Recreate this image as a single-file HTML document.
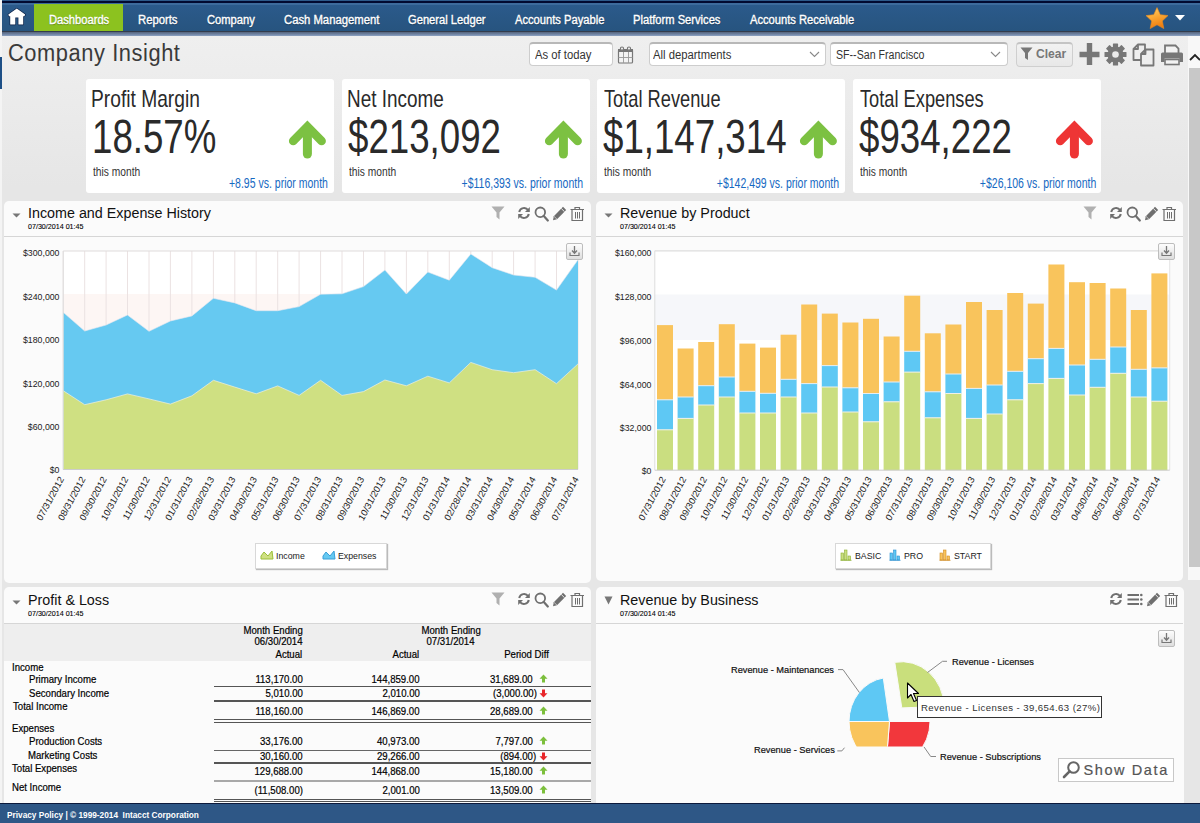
<!DOCTYPE html>
<html><head><meta charset="utf-8">
<style>
*{margin:0;padding:0;box-sizing:border-box}
html,body{width:1200px;height:823px;overflow:hidden}
body{font-family:"Liberation Sans",sans-serif;background:#f4f4f4;position:relative;color:#222}
.abs{position:absolute}
.t{position:absolute;white-space:nowrap;line-height:1;transform-origin:0 0}
#topline{left:2px;top:0;width:1198px;height:4.5px;background:linear-gradient(#2d5a8a 0,#2d5a8a 1px,#020a30 1px,#020a30 3.5px,#3d6b9c 3.5px)}
#nav{left:2px;top:4.5px;width:1198px;height:26.5px;background:linear-gradient(#2b5a8b,#27547f)}
#navsh{left:2px;top:31px;width:1198px;height:5px;background:linear-gradient(#333c4c 0,#333c4c 1px,#56657c 1px,#6c80a0 3px,#8ea3c2 5px)}
.nv{color:#fff;font-size:12px;top:14px;-webkit-text-stroke:0.35px #fff;text-shadow:0 1px 1px rgba(0,0,0,.35)}
#page{left:2px;top:36px;width:1198px;height:767px;background:linear-gradient(#efefef,#e6e6e6 150px,#e6e6e6)}
#footer{left:0;top:803px;width:1200px;height:20px;background:#2e5786;border-top:2px solid #0c1a3c}
.card{position:absolute;top:79px;height:114px;width:248px;background:#fff;border-radius:3px}
.ct{font-size:24px;color:#2a2a2a;top:8.4px;left:6.6px;transform:scaleX(.78)}
.cn{font-size:47.5px;color:#2a2a2a;top:34px;left:5.5px;transform:scaleX(.772)}
.cm{font-size:13.2px;color:#333;top:86.1px;left:7px;transform:scaleX(.775)}
.cp{font-size:14px;color:#1669c2;top:97.3px;transform:scaleX(.75);transform-origin:100% 0}
.panel{position:absolute;background:#fbfbfb;border-radius:5px}
.inp{position:absolute;top:42.3px;height:24px;background:#fff;border:1px solid #cdcdcd;border-top:2px solid #b8b8b8;border-radius:4px}
.it{font-size:12px;color:#333;top:48.5px;transform:scaleX(.94)}
</style></head><body>
<div id="topline" class="abs"></div>
<div id="nav" class="abs"></div>
<div id="navsh" class="abs"></div>
<div class="abs" style="left:34px;top:4px;width:89px;height:27px;background:#8cc21f"></div>
<!-- home icon -->
<svg class="abs" style="left:7px;top:8px" width="20" height="19" viewBox="0 0 20 19">
<path d="M9.8 0.6 L18.2 6.6 L17.4 8.2 L16.2 8.2 L16.2 16.6 L11.4 16.6 L11.4 9.6 L8.3 9.6 L8.3 16.6 L3.2 16.6 L3.2 8.2 L2 8.2 L1.3 6.6 Z" fill="#fff" stroke="#0b1f46" stroke-width="1.3" stroke-linejoin="round" paint-order="stroke"/>
</svg>
<span class="t nv" style="left:48.5px;transform:scaleX(.93)">Dashboards</span>
<span class="t nv" style="left:137.5px;transform:scaleX(.94)">Reports</span>
<span class="t nv" style="left:206.5px;transform:scaleX(.93)">Company</span>
<span class="t nv" style="left:284px;transform:scaleX(.94)">Cash Management</span>
<span class="t nv" style="left:408px;transform:scaleX(.93)">General Ledger</span>
<span class="t nv" style="left:514.5px;transform:scaleX(.93)">Accounts Payable</span>
<span class="t nv" style="left:633px;transform:scaleX(.93)">Platform Services</span>
<span class="t nv" style="left:750px;transform:scaleX(.93)">Accounts Receivable</span>
<!-- star -->
<svg class="abs" style="left:1143.5px;top:5.5px" width="26" height="24" viewBox="0 0 26 24">
<defs><linearGradient id="sg" x1="0" y1="0" x2="0.3" y2="1"><stop offset="0" stop-color="#ffd36a"/><stop offset="0.55" stop-color="#f9a531"/><stop offset="1" stop-color="#ef7d10"/></linearGradient></defs>
<path d="M13.00,1.60 L16.29,8.67 L24.03,9.62 L18.33,14.93 L19.82,22.58 L13.00,18.80 L6.18,22.58 L7.67,14.93 L1.97,9.62 L9.71,8.67 Z" fill="url(#sg)" stroke="#e98a1c" stroke-width="0.6" stroke-linejoin="round"/>
</svg>
<svg class="abs" style="left:1175px;top:15px" width="10" height="6" viewBox="0 0 10 6"><path d="M0 0 L10 0 L5 5.5 Z" fill="#fff"/></svg>

<div id="page" class="abs"></div><div class="abs" style="left:0;top:57px;width:1.5px;height:32px;background:#1d4f86"></div>
<div id="footer" class="abs"></div>

<!-- title -->
<span class="t" style="left:8.3px;top:42.3px;font-size:23px;letter-spacing:0.6px;color:#3a3a3a;transform:scaleX(.95)">Company Insight</span>

<!-- toolbar -->
<div class="inp" style="left:529px;width:84px"></div>
<span class="t it" style="left:534.5px">As of today</span>
<svg class="abs" style="left:617px;top:46px" width="17" height="18" viewBox="0 0 17 18">
<rect x="1.5" y="3.5" width="14" height="13.5" rx="1" fill="#f4f4f4" stroke="#777" stroke-width="1.2"/>
<rect x="1" y="3" width="15" height="3" fill="#777"/>
<circle cx="5" cy="2.6" r="1.6" fill="#eee" stroke="#777" stroke-width="1.1"/><circle cx="12" cy="2.6" r="1.6" fill="#eee" stroke="#777" stroke-width="1.1"/>
<path d="M1.5 11.5H15.5M6.5 6V17M11.5 6V17" stroke="#999" stroke-width="0.9"/>
</svg>
<div class="inp" style="left:648.5px;width:177.5px"></div>
<span class="t it" style="left:653px">All departments</span>
<svg class="abs" style="left:809px;top:51px" width="11" height="7" viewBox="0 0 11 7"><path d="M1 1 L5.5 5.5 L10 1" fill="none" stroke="#888" stroke-width="1.1"/></svg>
<div class="inp" style="left:830px;width:177.5px"></div>
<span class="t it" style="left:835.5px;transform:scaleX(.885)">SF--San Francisco</span>
<svg class="abs" style="left:990px;top:51px" width="11" height="7" viewBox="0 0 11 7"><path d="M1 1 L5.5 5.5 L10 1" fill="none" stroke="#888" stroke-width="1.1"/></svg>
<div class="abs" style="left:1015.5px;top:41.5px;width:57.5px;height:25px;border:1px solid #cfcfcf;border-top:2px solid #c4c4c4;border-radius:4px;background:linear-gradient(#f2f2f2,#e8e8e8)"></div>
<svg class="abs" style="left:1020px;top:47px" width="13" height="14" viewBox="0 0 13 14"><path d="M0.5 0.5 H12.5 L8 6 V13 L5 11 V6 Z" fill="#777"/></svg>
<span class="t" style="left:1035.5px;top:47px;font-size:13px;font-weight:bold;color:#777;transform:scaleX(.93)">Clear</span>
<!-- plus -->
<svg class="abs" style="left:1078.5px;top:42.5px" width="22" height="23" viewBox="0 0 22 23"><path d="M7.8 0H13.2V8.8H20.5V14.2H13.2V22H7.8V14.2H0.5V8.8H7.8Z" fill="#777"/></svg>
<!-- gear -->
<svg class="abs" style="left:1104px;top:43px" width="23" height="23" viewBox="-11.5 -11.5 23 23">
<g fill="#777">
<circle r="8"/>
<g id="tooth"><rect x="-2.6" y="-11" width="5.2" height="5" rx="0.6"/></g>
<use href="#tooth" transform="rotate(45)"/><use href="#tooth" transform="rotate(90)"/><use href="#tooth" transform="rotate(135)"/>
<use href="#tooth" transform="rotate(180)"/><use href="#tooth" transform="rotate(225)"/><use href="#tooth" transform="rotate(270)"/><use href="#tooth" transform="rotate(315)"/>
</g>
<circle r="3.3" fill="#eaeaea"/>
</svg>
<!-- copy -->
<svg class="abs" style="left:1132px;top:43px" width="24" height="24" viewBox="0 0 24 24">
<path d="M1.5 6 L6 1.5 H13 V17 H1.5 Z M1.5 6 H6 V1.5" fill="#eee" stroke="#777" stroke-width="1.8" stroke-linejoin="round"/>
<path d="M9 11 L13.5 6.5 H21.5 V22.5 H9 Z M9 11 H13.5 V6.5" fill="#eee" stroke="#777" stroke-width="1.8" stroke-linejoin="round"/>
</svg>
<!-- printer -->
<svg class="abs" style="left:1160px;top:44px" width="24" height="22" viewBox="0 0 24 22">
<path d="M5 9 V1.5 H15.5 L18.5 4.5 V9" fill="#f3f3f3" stroke="#777" stroke-width="1.8"/>
<path d="M2.5 8.5 H21.5 Q23 8.5 23 10 V18 H19.5 V14.5 H4.5 V18 H1 V10 Q1 8.5 2.5 8.5Z" fill="#777"/>
<rect x="5" y="15.5" width="14" height="5" fill="#f3f3f3" stroke="#777" stroke-width="1.6"/>
</svg>
<!-- scrollbar -->
<div class="abs" style="left:1188px;top:36px;width:12px;height:544px;background:#f8f8f8"></div>
<div class="abs" style="left:1189px;top:68px;width:11px;height:499px;background:#c8c8c8"></div>
<svg class="abs" style="left:1189px;top:52px" width="11" height="11" viewBox="0 0 11 11"><path d="M1 8 L6 3 L11 8" fill="none" stroke="#222" stroke-width="1.8"/></svg>

<!-- KPI cards -->
<div class="card" style="left:86px">
<span class="t ct" style="left:5.3px;transform:scaleX(.80)">Profit Margin</span><span class="t cn">18.57%</span><span class="t cm">this month</span><span class="t cp" style="right:6.5px">+8.95 vs. prior month</span>
</div>
<div class="card" style="left:342px">
<span class="t ct" style="left:4.6px;transform:scaleX(.788)">Net Income</span><span class="t cn">$213,092</span><span class="t cm">this month</span><span class="t cp" style="right:7px">+$116,393 vs. prior month</span>
</div>
<div class="card" style="left:597px">
<span class="t ct" style="left:6.6px;transform:scaleX(.76)">Total Revenue</span><span class="t cn">$1,147,314</span><span class="t cm">this month</span><span class="t cp" style="right:5.5px">+$142,499 vs. prior month</span>
</div>
<div class="card" style="left:853px">
<span class="t ct" style="left:6.6px;transform:scaleX(.76)">Total Expenses</span><span class="t cn">$934,222</span><span class="t cm">this month</span><span class="t cp" style="right:5px">+$26,106 vs. prior month</span>
</div>
<svg class="abs" style="left:287.3px;top:118px" width="41" height="42" viewBox="0 0 41 42"><path d="M6.2 23 L20.4 8.6 L34.6 23" fill="none" stroke="#7cc142" stroke-width="8.6" stroke-linecap="round" stroke-linejoin="miter"/><path d="M20.4 12 V36" stroke="#7cc142" stroke-width="9" stroke-linecap="round"/></svg>
<svg class="abs" style="left:543.3px;top:118px" width="41" height="42" viewBox="0 0 41 42"><path d="M6.2 23 L20.4 8.6 L34.6 23" fill="none" stroke="#7cc142" stroke-width="8.6" stroke-linecap="round" stroke-linejoin="miter"/><path d="M20.4 12 V36" stroke="#7cc142" stroke-width="9" stroke-linecap="round"/></svg>
<svg class="abs" style="left:798.3px;top:118px" width="41" height="42" viewBox="0 0 41 42"><path d="M6.2 23 L20.4 8.6 L34.6 23" fill="none" stroke="#7cc142" stroke-width="8.6" stroke-linecap="round" stroke-linejoin="miter"/><path d="M20.4 12 V36" stroke="#7cc142" stroke-width="9" stroke-linecap="round"/></svg>
<svg class="abs" style="left:1054.3px;top:118px" width="41" height="42" viewBox="0 0 41 42"><path d="M6.2 23 L20.4 8.6 L34.6 23" fill="none" stroke="#ee3535" stroke-width="8.6" stroke-linecap="round" stroke-linejoin="miter"/><path d="M20.4 12 V36" stroke="#ee3535" stroke-width="9" stroke-linecap="round"/></svg>

<div class="panel" style="left:4px;top:201px;width:587px;height:381.6px"></div>
<div class="panel" style="left:596px;top:201px;width:587px;height:379.6px"></div>
<div class="panel" style="left:4px;top:586.5px;width:587px;height:220px"></div>
<div class="panel" style="left:596px;top:586.5px;width:588px;height:220px"></div>
<div class="abs" style="left:4px;top:236px;width:587px;height:1px;background:#d6d6d6"></div><svg class="abs" style="left:11.5px;top:213.3px" width="9" height="6" viewBox="0 0 9 6"><path d="M0.5 0.5H8.5L4.5 4.5Z" fill="#777"/></svg><span class="t" style="left:27.8px;top:204.6px;font-size:15.4px;color:#111;transform:scaleX(.93)">Income and Expense History</span><span class="t" style="left:28px;top:223.1px;font-size:7.5px;color:#000;-webkit-text-stroke:.1px #000;transform:scaleX(.95)">07/30/2014 01:45</span><svg class="abs" style="left:570px;top:206px" width="15" height="16" viewBox="0 0 15 16"><path d="M0.5 3.5H14M5 3V1.5H9.5V3" fill="none" stroke="#6f6f6f" stroke-width="1.2"/><path d="M2 4V14.5H12.5V4" fill="none" stroke="#6f6f6f" stroke-width="1.2"/><path d="M5.5 6V12.5M7.5 6V12.5M9.5 6V12.5" stroke="#6f6f6f" stroke-width="1"/></svg><svg class="abs" style="left:552px;top:206px" width="15" height="15" viewBox="0 0 15 15"><path d="M11 0.8 L14.2 4 L5 13.2 L1 14.2 L1.8 10.2 Z" fill="#6f6f6f"/><path d="M9.3 2.5 L12.5 5.7" stroke="#fafafa" stroke-width="0.9"/><path d="M1.8 10.2 L5 13.2" stroke="#fafafa" stroke-width="0.6"/></svg><svg class="abs" style="left:534px;top:206px" width="15" height="16" viewBox="0 0 15 16"><circle cx="6.3" cy="6.3" r="4.8" fill="none" stroke="#6f6f6f" stroke-width="1.8"/><path d="M9.6 9.8 L13.8 14.5" stroke="#6f6f6f" stroke-width="2.2" stroke-linecap="round"/></svg><svg class="abs" style="left:517px;top:206px" width="14" height="14" viewBox="0 0 14 14"><path d="M2.2 6 A5 5 0 0 1 11.2 4.2" fill="none" stroke="#6f6f6f" stroke-width="2"/><path d="M12.8 1 V6 H8 Z" fill="#6f6f6f"/><path d="M11.8 8 A5 5 0 0 1 2.8 9.8" fill="none" stroke="#6f6f6f" stroke-width="2"/><path d="M1.2 13 V8 H6 Z" fill="#6f6f6f"/></svg><svg class="abs" style="left:491px;top:206px" width="14" height="14" viewBox="0 0 14 14"><path d="M0.5 0.5H13.5L8.5 6.5V13.5L5.5 11V6.5Z" fill="#b0b0b0"/></svg><div class="abs" style="left:596px;top:236px;width:587px;height:1px;background:#d6d6d6"></div><svg class="abs" style="left:603.5px;top:213.3px" width="9" height="6" viewBox="0 0 9 6"><path d="M0.5 0.5H8.5L4.5 4.5Z" fill="#777"/></svg><span class="t" style="left:619.8px;top:204.6px;font-size:15.4px;color:#111;transform:scaleX(.93)">Revenue by Product</span><span class="t" style="left:620px;top:223.1px;font-size:7.5px;color:#000;-webkit-text-stroke:.1px #000;transform:scaleX(.95)">07/30/2014 01:45</span><svg class="abs" style="left:1162px;top:206px" width="15" height="16" viewBox="0 0 15 16"><path d="M0.5 3.5H14M5 3V1.5H9.5V3" fill="none" stroke="#6f6f6f" stroke-width="1.2"/><path d="M2 4V14.5H12.5V4" fill="none" stroke="#6f6f6f" stroke-width="1.2"/><path d="M5.5 6V12.5M7.5 6V12.5M9.5 6V12.5" stroke="#6f6f6f" stroke-width="1"/></svg><svg class="abs" style="left:1144px;top:206px" width="15" height="15" viewBox="0 0 15 15"><path d="M11 0.8 L14.2 4 L5 13.2 L1 14.2 L1.8 10.2 Z" fill="#6f6f6f"/><path d="M9.3 2.5 L12.5 5.7" stroke="#fafafa" stroke-width="0.9"/><path d="M1.8 10.2 L5 13.2" stroke="#fafafa" stroke-width="0.6"/></svg><svg class="abs" style="left:1126px;top:206px" width="15" height="16" viewBox="0 0 15 16"><circle cx="6.3" cy="6.3" r="4.8" fill="none" stroke="#6f6f6f" stroke-width="1.8"/><path d="M9.6 9.8 L13.8 14.5" stroke="#6f6f6f" stroke-width="2.2" stroke-linecap="round"/></svg><svg class="abs" style="left:1109px;top:206px" width="14" height="14" viewBox="0 0 14 14"><path d="M2.2 6 A5 5 0 0 1 11.2 4.2" fill="none" stroke="#6f6f6f" stroke-width="2"/><path d="M12.8 1 V6 H8 Z" fill="#6f6f6f"/><path d="M11.8 8 A5 5 0 0 1 2.8 9.8" fill="none" stroke="#6f6f6f" stroke-width="2"/><path d="M1.2 13 V8 H6 Z" fill="#6f6f6f"/></svg><svg class="abs" style="left:1083px;top:206px" width="14" height="14" viewBox="0 0 14 14"><path d="M0.5 0.5H13.5L8.5 6.5V13.5L5.5 11V6.5Z" fill="#b0b0b0"/></svg><div class="abs" style="left:4px;top:623px;width:587px;height:1px;background:#d6d6d6"></div><svg class="abs" style="left:11.5px;top:600.3px" width="9" height="6" viewBox="0 0 9 6"><path d="M0.5 0.5H8.5L4.5 4.5Z" fill="#777"/></svg><span class="t" style="left:27.8px;top:591.6px;font-size:15.4px;color:#111;transform:scaleX(.93)">Profit &amp; Loss</span><span class="t" style="left:28px;top:610.1px;font-size:7.5px;color:#000;-webkit-text-stroke:.1px #000;transform:scaleX(.95)">07/30/2014 01:45</span><svg class="abs" style="left:570px;top:592px" width="15" height="16" viewBox="0 0 15 16"><path d="M0.5 3.5H14M5 3V1.5H9.5V3" fill="none" stroke="#6f6f6f" stroke-width="1.2"/><path d="M2 4V14.5H12.5V4" fill="none" stroke="#6f6f6f" stroke-width="1.2"/><path d="M5.5 6V12.5M7.5 6V12.5M9.5 6V12.5" stroke="#6f6f6f" stroke-width="1"/></svg><svg class="abs" style="left:552px;top:592px" width="15" height="15" viewBox="0 0 15 15"><path d="M11 0.8 L14.2 4 L5 13.2 L1 14.2 L1.8 10.2 Z" fill="#6f6f6f"/><path d="M9.3 2.5 L12.5 5.7" stroke="#fafafa" stroke-width="0.9"/><path d="M1.8 10.2 L5 13.2" stroke="#fafafa" stroke-width="0.6"/></svg><svg class="abs" style="left:534px;top:592px" width="15" height="16" viewBox="0 0 15 16"><circle cx="6.3" cy="6.3" r="4.8" fill="none" stroke="#6f6f6f" stroke-width="1.8"/><path d="M9.6 9.8 L13.8 14.5" stroke="#6f6f6f" stroke-width="2.2" stroke-linecap="round"/></svg><svg class="abs" style="left:517px;top:592px" width="14" height="14" viewBox="0 0 14 14"><path d="M2.2 6 A5 5 0 0 1 11.2 4.2" fill="none" stroke="#6f6f6f" stroke-width="2"/><path d="M12.8 1 V6 H8 Z" fill="#6f6f6f"/><path d="M11.8 8 A5 5 0 0 1 2.8 9.8" fill="none" stroke="#6f6f6f" stroke-width="2"/><path d="M1.2 13 V8 H6 Z" fill="#6f6f6f"/></svg><svg class="abs" style="left:491px;top:592px" width="14" height="14" viewBox="0 0 14 14"><path d="M0.5 0.5H13.5L8.5 6.5V13.5L5.5 11V6.5Z" fill="#b0b0b0"/></svg><div class="abs" style="left:596px;top:623px;width:587px;height:1px;background:#d6d6d6"></div><svg class="abs" style="left:603.5px;top:595.5px" width="9" height="9" viewBox="0 0 9 9"><path d="M0.5 0.5H8.5L4.5 8.5Z" fill="#777"/></svg><span class="t" style="left:619.8px;top:591.6px;font-size:15.4px;color:#111;transform:scaleX(.93)">Revenue by Business</span><span class="t" style="left:620px;top:610.1px;font-size:7.5px;color:#000;-webkit-text-stroke:.1px #000;transform:scaleX(.95)">07/30/2014 01:45</span><svg class="abs" style="left:1164px;top:592px" width="15" height="16" viewBox="0 0 15 16"><path d="M0.5 3.5H14M5 3V1.5H9.5V3" fill="none" stroke="#6f6f6f" stroke-width="1.2"/><path d="M2 4V14.5H12.5V4" fill="none" stroke="#6f6f6f" stroke-width="1.2"/><path d="M5.5 6V12.5M7.5 6V12.5M9.5 6V12.5" stroke="#6f6f6f" stroke-width="1"/></svg><svg class="abs" style="left:1146px;top:592px" width="15" height="15" viewBox="0 0 15 15"><path d="M11 0.8 L14.2 4 L5 13.2 L1 14.2 L1.8 10.2 Z" fill="#6f6f6f"/><path d="M9.3 2.5 L12.5 5.7" stroke="#fafafa" stroke-width="0.9"/><path d="M1.8 10.2 L5 13.2" stroke="#fafafa" stroke-width="0.6"/></svg><svg class="abs" style="left:1127px;top:593px" width="16" height="13" viewBox="0 0 16 13"><path d="M0.5 2H12M0.5 6.5H12M0.5 11H12" stroke="#6f6f6f" stroke-width="1.8"/><circle cx="14.3" cy="2" r="1.3" fill="#6f6f6f"/><circle cx="14.3" cy="6.5" r="1.3" fill="#6f6f6f"/><circle cx="14.3" cy="11" r="1.3" fill="#6f6f6f"/></svg><svg class="abs" style="left:1109px;top:592px" width="14" height="14" viewBox="0 0 14 14"><path d="M2.2 6 A5 5 0 0 1 11.2 4.2" fill="none" stroke="#6f6f6f" stroke-width="2"/><path d="M12.8 1 V6 H8 Z" fill="#6f6f6f"/><path d="M11.8 8 A5 5 0 0 1 2.8 9.8" fill="none" stroke="#6f6f6f" stroke-width="2"/><path d="M1.2 13 V8 H6 Z" fill="#6f6f6f"/></svg><svg class="abs" style="left:0;top:0" width="600" height="590" viewBox="0 0 600 590"><rect x="63.2" y="251" width="514.6999999999999" height="218.5" fill="#fff"/><rect x="63.2" y="294" width="514.6999999999999" height="175.5" fill="#fdf6f4"/><line x1="63.2" y1="251" x2="63.2" y2="469.5" stroke="#ebe2e2" stroke-width="1"/><line x1="84.7" y1="251" x2="84.7" y2="469.5" stroke="#ebe2e2" stroke-width="1"/><line x1="106.1" y1="251" x2="106.1" y2="469.5" stroke="#ebe2e2" stroke-width="1"/><line x1="127.5" y1="251" x2="127.5" y2="469.5" stroke="#ebe2e2" stroke-width="1"/><line x1="149.0" y1="251" x2="149.0" y2="469.5" stroke="#ebe2e2" stroke-width="1"/><line x1="170.4" y1="251" x2="170.4" y2="469.5" stroke="#ebe2e2" stroke-width="1"/><line x1="191.9" y1="251" x2="191.9" y2="469.5" stroke="#ebe2e2" stroke-width="1"/><line x1="213.4" y1="251" x2="213.4" y2="469.5" stroke="#ebe2e2" stroke-width="1"/><line x1="234.8" y1="251" x2="234.8" y2="469.5" stroke="#ebe2e2" stroke-width="1"/><line x1="256.2" y1="251" x2="256.2" y2="469.5" stroke="#ebe2e2" stroke-width="1"/><line x1="277.7" y1="251" x2="277.7" y2="469.5" stroke="#ebe2e2" stroke-width="1"/><line x1="299.1" y1="251" x2="299.1" y2="469.5" stroke="#ebe2e2" stroke-width="1"/><line x1="320.6" y1="251" x2="320.6" y2="469.5" stroke="#ebe2e2" stroke-width="1"/><line x1="342.0" y1="251" x2="342.0" y2="469.5" stroke="#ebe2e2" stroke-width="1"/><line x1="363.5" y1="251" x2="363.5" y2="469.5" stroke="#ebe2e2" stroke-width="1"/><line x1="384.9" y1="251" x2="384.9" y2="469.5" stroke="#ebe2e2" stroke-width="1"/><line x1="406.4" y1="251" x2="406.4" y2="469.5" stroke="#ebe2e2" stroke-width="1"/><line x1="427.8" y1="251" x2="427.8" y2="469.5" stroke="#ebe2e2" stroke-width="1"/><line x1="449.3" y1="251" x2="449.3" y2="469.5" stroke="#ebe2e2" stroke-width="1"/><line x1="470.8" y1="251" x2="470.8" y2="469.5" stroke="#ebe2e2" stroke-width="1"/><line x1="492.2" y1="251" x2="492.2" y2="469.5" stroke="#ebe2e2" stroke-width="1"/><line x1="513.6" y1="251" x2="513.6" y2="469.5" stroke="#ebe2e2" stroke-width="1"/><line x1="535.1" y1="251" x2="535.1" y2="469.5" stroke="#ebe2e2" stroke-width="1"/><line x1="556.5" y1="251" x2="556.5" y2="469.5" stroke="#ebe2e2" stroke-width="1"/><line x1="578.0" y1="251" x2="578.0" y2="469.5" stroke="#ebe2e2" stroke-width="1"/><line x1="63.2" y1="251" x2="577.9" y2="251" stroke="#e0dcdc" stroke-width="1.2"/><polygon points="63.2,312.3 84.7,331 106.1,325 127.5,315 149.0,331.3 170.4,321 191.9,315.9 213.4,298.3 234.8,302.9 256.2,310.7 277.7,310.7 299.1,306.6 320.6,294.2 342.0,293.8 363.5,286.6 384.9,270 406.4,294 427.8,272 449.3,280.2 470.8,254 492.2,267.7 513.6,275 535.1,277.3 556.5,290.1 578.0,259.8 577.9,469.5 63.2,469.5" fill="#66c9f1"/><polygon points="63.2,390.7 84.7,404.7 106.1,399.8 127.5,393.9 149.0,398.9 170.4,404.1 191.9,395.8 213.4,380.3 234.8,387.1 256.2,393.8 277.7,385.9 299.1,395.4 320.6,380.3 342.0,395.4 363.5,391.6 384.9,380 406.4,385.8 427.8,376.2 449.3,382.9 470.8,362.4 492.2,369.7 513.6,372.7 535.1,369.7 556.5,383.7 578.0,363.9 577.9,469.5 63.2,469.5" fill="#cfe082"/><polyline points="63.2,312.3 84.7,331 106.1,325 127.5,315 149.0,331.3 170.4,321 191.9,315.9 213.4,298.3 234.8,302.9 256.2,310.7 277.7,310.7 299.1,306.6 320.6,294.2 342.0,293.8 363.5,286.6 384.9,270 406.4,294 427.8,272 449.3,280.2 470.8,254 492.2,267.7 513.6,275 535.1,277.3 556.5,290.1 578.0,259.8" fill="none" stroke="#e8e8f0" stroke-width="1" opacity=".6"/><polyline points="63.2,390.7 84.7,404.7 106.1,399.8 127.5,393.9 149.0,398.9 170.4,404.1 191.9,395.8 213.4,380.3 234.8,387.1 256.2,393.8 277.7,385.9 299.1,395.4 320.6,380.3 342.0,395.4 363.5,391.6 384.9,380 406.4,385.8 427.8,376.2 449.3,382.9 470.8,362.4 492.2,369.7 513.6,372.7 535.1,369.7 556.5,383.7 578.0,363.9" fill="none" stroke="#f0f0e0" stroke-width="1" opacity=".7"/><line x1="63.2" y1="469.5" x2="577.9" y2="469.5" stroke="#ccc" stroke-width="1"/><line x1="63.2" y1="251" x2="63.2" y2="469.5" stroke="#ddd" stroke-width="1"/><text x="59.5" y="256.3" text-anchor="end" font-size="9.5" fill="#1a1a1a" transform="translate(59.5,0) scale(.923,1) translate(-59.5,0)">$300,000</text><text x="59.5" y="299.8" text-anchor="end" font-size="9.5" fill="#1a1a1a" transform="translate(59.5,0) scale(.923,1) translate(-59.5,0)">$240,000</text><text x="59.5" y="343.3" text-anchor="end" font-size="9.5" fill="#1a1a1a" transform="translate(59.5,0) scale(.923,1) translate(-59.5,0)">$180,000</text><text x="59.5" y="386.8" text-anchor="end" font-size="9.5" fill="#1a1a1a" transform="translate(59.5,0) scale(.923,1) translate(-59.5,0)">$120,000</text><text x="59.5" y="430.3" text-anchor="end" font-size="9.5" fill="#1a1a1a" transform="translate(59.5,0) scale(.923,1) translate(-59.5,0)">$60,000</text><text x="59.5" y="472.8" text-anchor="end" font-size="9.5" fill="#1a1a1a" transform="translate(59.5,0) scale(.923,1) translate(-59.5,0)">$0</text><text font-size="9.8" fill="#1a1a1a" text-anchor="end" transform="translate(64.2,479) scale(.923,1) rotate(-60)">07/31/2012</text><text font-size="9.8" fill="#1a1a1a" text-anchor="end" transform="translate(85.7,479) scale(.923,1) rotate(-60)">08/31/2012</text><text font-size="9.8" fill="#1a1a1a" text-anchor="end" transform="translate(107.1,479) scale(.923,1) rotate(-60)">09/30/2012</text><text font-size="9.8" fill="#1a1a1a" text-anchor="end" transform="translate(128.6,479) scale(.923,1) rotate(-60)">10/31/2012</text><text font-size="9.8" fill="#1a1a1a" text-anchor="end" transform="translate(150.0,479) scale(.923,1) rotate(-60)">11/30/2012</text><text font-size="9.8" fill="#1a1a1a" text-anchor="end" transform="translate(171.4,479) scale(.923,1) rotate(-60)">12/31/2012</text><text font-size="9.8" fill="#1a1a1a" text-anchor="end" transform="translate(192.9,479) scale(.923,1) rotate(-60)">01/31/2013</text><text font-size="9.8" fill="#1a1a1a" text-anchor="end" transform="translate(214.4,479) scale(.923,1) rotate(-60)">02/28/2013</text><text font-size="9.8" fill="#1a1a1a" text-anchor="end" transform="translate(235.8,479) scale(.923,1) rotate(-60)">03/31/2013</text><text font-size="9.8" fill="#1a1a1a" text-anchor="end" transform="translate(257.2,479) scale(.923,1) rotate(-60)">04/30/2013</text><text font-size="9.8" fill="#1a1a1a" text-anchor="end" transform="translate(278.7,479) scale(.923,1) rotate(-60)">05/31/2013</text><text font-size="9.8" fill="#1a1a1a" text-anchor="end" transform="translate(300.1,479) scale(.923,1) rotate(-60)">06/30/2013</text><text font-size="9.8" fill="#1a1a1a" text-anchor="end" transform="translate(321.6,479) scale(.923,1) rotate(-60)">07/31/2013</text><text font-size="9.8" fill="#1a1a1a" text-anchor="end" transform="translate(343.0,479) scale(.923,1) rotate(-60)">08/31/2013</text><text font-size="9.8" fill="#1a1a1a" text-anchor="end" transform="translate(364.5,479) scale(.923,1) rotate(-60)">09/30/2013</text><text font-size="9.8" fill="#1a1a1a" text-anchor="end" transform="translate(385.9,479) scale(.923,1) rotate(-60)">10/31/2013</text><text font-size="9.8" fill="#1a1a1a" text-anchor="end" transform="translate(407.4,479) scale(.923,1) rotate(-60)">11/30/2013</text><text font-size="9.8" fill="#1a1a1a" text-anchor="end" transform="translate(428.8,479) scale(.923,1) rotate(-60)">12/31/2013</text><text font-size="9.8" fill="#1a1a1a" text-anchor="end" transform="translate(450.3,479) scale(.923,1) rotate(-60)">01/31/2014</text><text font-size="9.8" fill="#1a1a1a" text-anchor="end" transform="translate(471.8,479) scale(.923,1) rotate(-60)">02/28/2014</text><text font-size="9.8" fill="#1a1a1a" text-anchor="end" transform="translate(493.2,479) scale(.923,1) rotate(-60)">03/31/2014</text><text font-size="9.8" fill="#1a1a1a" text-anchor="end" transform="translate(514.6,479) scale(.923,1) rotate(-60)">04/30/2014</text><text font-size="9.8" fill="#1a1a1a" text-anchor="end" transform="translate(536.1,479) scale(.923,1) rotate(-60)">05/31/2014</text><text font-size="9.8" fill="#1a1a1a" text-anchor="end" transform="translate(557.5,479) scale(.923,1) rotate(-60)">06/30/2014</text><text font-size="9.8" fill="#1a1a1a" text-anchor="end" transform="translate(579.0,479) scale(.923,1) rotate(-60)">07/31/2014</text></svg><div class="abs" style="left:566px;top:243px;width:17px;height:17px;border:1px solid #bdbdbd;border-radius:2px;background:linear-gradient(#fdfdfd,#dedede)"></div><svg class="abs" style="left:569px;top:245px" width="11" height="12" viewBox="0 0 11 12"><path d="M5.5 1V8M3 5.5L5.5 8.2L8 5.5" fill="none" stroke="#777" stroke-width="1.3"/><path d="M1 7.5V10.5H10V7.5" fill="none" stroke="#777" stroke-width="1.2"/></svg><div class="abs" style="left:255px;top:543px;width:132px;height:26px;background:#fff;border:1px solid #d8d8d8;box-shadow:1px 1px 1px #bbb"></div><svg class="abs" style="left:260px;top:550px" width="14" height="10" viewBox="0 0 14 10"><path d="M1 9 L1 6 L4 2 L8 6 L12 1 L13 9 Z" fill="#cfe082" stroke="#9bbf3a" stroke-width="1"/></svg><span class="t" style="left:276px;top:551px;font-size:9.5px;color:#222;transform:scaleX(.923)">Income</span><svg class="abs" style="left:322px;top:550px" width="14" height="10" viewBox="0 0 14 10"><path d="M1 9 L1 6 L4 2 L8 6 L12 1 L13 9 Z" fill="#66c9f1" stroke="#3a9fd8" stroke-width="1"/></svg><span class="t" style="left:338px;top:551px;font-size:9.5px;color:#222;transform:scaleX(.923)">Expenses</span><svg class="abs" style="left:0;top:0" width="1200" height="590" viewBox="0 0 1200 590"><rect x="654.8" y="250.8" width="514.9000000000001" height="219.39999999999998" fill="#fff"/><rect x="654.8" y="294.5" width="514.9000000000001" height="45.5" fill="#f6f7fa"/><line x1="654.8" y1="250.8" x2="1169.7" y2="250.8" stroke="#dedede" stroke-width="1.2"/><line x1="654.8" y1="250.8" x2="654.8" y2="470.2" stroke="#ddd" stroke-width="1"/><line x1="1169.7" y1="250.8" x2="1169.7" y2="470.2" stroke="#e4e4e4" stroke-width="1"/><rect x="657.0" y="325.1" width="16" height="74.7" fill="#f9c45c"/><rect x="657.0" y="399.8" width="16" height="30.0" fill="#5ec8f4"/><rect x="657.0" y="429.8" width="16" height="40.4" fill="#cade80"/><line x1="657.0" y1="399.8" x2="673.0" y2="399.8" stroke="#e8eef0" stroke-width="1"/><line x1="657.0" y1="429.8" x2="673.0" y2="429.8" stroke="#eef0e8" stroke-width="1"/><rect x="677.6" y="348.5" width="16" height="48.5" fill="#f9c45c"/><rect x="677.6" y="397" width="16" height="21.4" fill="#5ec8f4"/><rect x="677.6" y="418.4" width="16" height="51.8" fill="#cade80"/><line x1="677.6" y1="397" x2="693.6" y2="397" stroke="#e8eef0" stroke-width="1"/><line x1="677.6" y1="418.4" x2="693.6" y2="418.4" stroke="#eef0e8" stroke-width="1"/><rect x="698.2" y="342" width="16" height="43.7" fill="#f9c45c"/><rect x="698.2" y="385.7" width="16" height="19.3" fill="#5ec8f4"/><rect x="698.2" y="405" width="16" height="65.2" fill="#cade80"/><line x1="698.2" y1="385.7" x2="714.2" y2="385.7" stroke="#e8eef0" stroke-width="1"/><line x1="698.2" y1="405" x2="714.2" y2="405" stroke="#eef0e8" stroke-width="1"/><rect x="718.8" y="324.2" width="16" height="52.8" fill="#f9c45c"/><rect x="718.8" y="377" width="16" height="20.0" fill="#5ec8f4"/><rect x="718.8" y="397" width="16" height="73.2" fill="#cade80"/><line x1="718.8" y1="377" x2="734.8" y2="377" stroke="#e8eef0" stroke-width="1"/><line x1="718.8" y1="397" x2="734.8" y2="397" stroke="#eef0e8" stroke-width="1"/><rect x="739.4" y="343.6" width="16" height="47.7" fill="#f9c45c"/><rect x="739.4" y="391.3" width="16" height="21.7" fill="#5ec8f4"/><rect x="739.4" y="413" width="16" height="57.2" fill="#cade80"/><line x1="739.4" y1="391.3" x2="755.4" y2="391.3" stroke="#e8eef0" stroke-width="1"/><line x1="739.4" y1="413" x2="755.4" y2="413" stroke="#eef0e8" stroke-width="1"/><rect x="760.0" y="347.6" width="16" height="45.7" fill="#f9c45c"/><rect x="760.0" y="393.3" width="16" height="19.7" fill="#5ec8f4"/><rect x="760.0" y="413" width="16" height="57.2" fill="#cade80"/><line x1="760.0" y1="393.3" x2="776.0" y2="393.3" stroke="#e8eef0" stroke-width="1"/><line x1="760.0" y1="413" x2="776.0" y2="413" stroke="#eef0e8" stroke-width="1"/><rect x="780.6" y="334.7" width="16" height="44.6" fill="#f9c45c"/><rect x="780.6" y="379.3" width="16" height="17.7" fill="#5ec8f4"/><rect x="780.6" y="397" width="16" height="73.2" fill="#cade80"/><line x1="780.6" y1="379.3" x2="796.6" y2="379.3" stroke="#e8eef0" stroke-width="1"/><line x1="780.6" y1="397" x2="796.6" y2="397" stroke="#eef0e8" stroke-width="1"/><rect x="801.2" y="304.5" width="16" height="79.1" fill="#f9c45c"/><rect x="801.2" y="383.6" width="16" height="29.4" fill="#5ec8f4"/><rect x="801.2" y="413" width="16" height="57.2" fill="#cade80"/><line x1="801.2" y1="383.6" x2="817.2" y2="383.6" stroke="#e8eef0" stroke-width="1"/><line x1="801.2" y1="413" x2="817.2" y2="413" stroke="#eef0e8" stroke-width="1"/><rect x="821.8" y="313.6" width="16" height="52.0" fill="#f9c45c"/><rect x="821.8" y="365.6" width="16" height="21.4" fill="#5ec8f4"/><rect x="821.8" y="387" width="16" height="83.2" fill="#cade80"/><line x1="821.8" y1="365.6" x2="837.8" y2="365.6" stroke="#e8eef0" stroke-width="1"/><line x1="821.8" y1="387" x2="837.8" y2="387" stroke="#eef0e8" stroke-width="1"/><rect x="842.4" y="322.5" width="16" height="65.3" fill="#f9c45c"/><rect x="842.4" y="387.8" width="16" height="24.2" fill="#5ec8f4"/><rect x="842.4" y="412" width="16" height="58.2" fill="#cade80"/><line x1="842.4" y1="387.8" x2="858.4" y2="387.8" stroke="#e8eef0" stroke-width="1"/><line x1="842.4" y1="412" x2="858.4" y2="412" stroke="#eef0e8" stroke-width="1"/><rect x="863.0" y="318.8" width="16" height="74.7" fill="#f9c45c"/><rect x="863.0" y="393.5" width="16" height="28.3" fill="#5ec8f4"/><rect x="863.0" y="421.8" width="16" height="48.4" fill="#cade80"/><line x1="863.0" y1="393.5" x2="879.0" y2="393.5" stroke="#e8eef0" stroke-width="1"/><line x1="863.0" y1="421.8" x2="879.0" y2="421.8" stroke="#eef0e8" stroke-width="1"/><rect x="883.6" y="336.5" width="16" height="45.5" fill="#f9c45c"/><rect x="883.6" y="382" width="16" height="19.8" fill="#5ec8f4"/><rect x="883.6" y="401.8" width="16" height="68.4" fill="#cade80"/><line x1="883.6" y1="382" x2="899.6" y2="382" stroke="#e8eef0" stroke-width="1"/><line x1="883.6" y1="401.8" x2="899.6" y2="401.8" stroke="#eef0e8" stroke-width="1"/><rect x="904.2" y="295.7" width="16" height="55.6" fill="#f9c45c"/><rect x="904.2" y="351.3" width="16" height="20.8" fill="#5ec8f4"/><rect x="904.2" y="372.1" width="16" height="98.1" fill="#cade80"/><line x1="904.2" y1="351.3" x2="920.2" y2="351.3" stroke="#e8eef0" stroke-width="1"/><line x1="904.2" y1="372.1" x2="920.2" y2="372.1" stroke="#eef0e8" stroke-width="1"/><rect x="924.8" y="333.3" width="16" height="58.5" fill="#f9c45c"/><rect x="924.8" y="391.8" width="16" height="26.0" fill="#5ec8f4"/><rect x="924.8" y="417.8" width="16" height="52.4" fill="#cade80"/><line x1="924.8" y1="391.8" x2="940.8" y2="391.8" stroke="#e8eef0" stroke-width="1"/><line x1="924.8" y1="417.8" x2="940.8" y2="417.8" stroke="#eef0e8" stroke-width="1"/><rect x="945.4" y="324.5" width="16" height="49.5" fill="#f9c45c"/><rect x="945.4" y="374" width="16" height="19.5" fill="#5ec8f4"/><rect x="945.4" y="393.5" width="16" height="76.7" fill="#cade80"/><line x1="945.4" y1="374" x2="961.4" y2="374" stroke="#e8eef0" stroke-width="1"/><line x1="945.4" y1="393.5" x2="961.4" y2="393.5" stroke="#eef0e8" stroke-width="1"/><rect x="966.0" y="302" width="16" height="86.4" fill="#f9c45c"/><rect x="966.0" y="388.4" width="16" height="30.0" fill="#5ec8f4"/><rect x="966.0" y="418.4" width="16" height="51.8" fill="#cade80"/><line x1="966.0" y1="388.4" x2="982.0" y2="388.4" stroke="#e8eef0" stroke-width="1"/><line x1="966.0" y1="418.4" x2="982.0" y2="418.4" stroke="#eef0e8" stroke-width="1"/><rect x="986.6" y="310" width="16" height="75.0" fill="#f9c45c"/><rect x="986.6" y="385" width="16" height="29.0" fill="#5ec8f4"/><rect x="986.6" y="414" width="16" height="56.2" fill="#cade80"/><line x1="986.6" y1="385" x2="1002.6" y2="385" stroke="#e8eef0" stroke-width="1"/><line x1="986.6" y1="414" x2="1002.6" y2="414" stroke="#eef0e8" stroke-width="1"/><rect x="1007.2" y="293" width="16" height="78.3" fill="#f9c45c"/><rect x="1007.2" y="371.3" width="16" height="28.5" fill="#5ec8f4"/><rect x="1007.2" y="399.8" width="16" height="70.4" fill="#cade80"/><line x1="1007.2" y1="371.3" x2="1023.2" y2="371.3" stroke="#e8eef0" stroke-width="1"/><line x1="1007.2" y1="399.8" x2="1023.2" y2="399.8" stroke="#eef0e8" stroke-width="1"/><rect x="1027.8" y="303.6" width="16" height="55.1" fill="#f9c45c"/><rect x="1027.8" y="358.7" width="16" height="24.9" fill="#5ec8f4"/><rect x="1027.8" y="383.6" width="16" height="86.6" fill="#cade80"/><line x1="1027.8" y1="358.7" x2="1043.8" y2="358.7" stroke="#e8eef0" stroke-width="1"/><line x1="1027.8" y1="383.6" x2="1043.8" y2="383.6" stroke="#eef0e8" stroke-width="1"/><rect x="1048.4" y="264.5" width="16" height="83.9" fill="#f9c45c"/><rect x="1048.4" y="348.4" width="16" height="30.0" fill="#5ec8f4"/><rect x="1048.4" y="378.4" width="16" height="91.8" fill="#cade80"/><line x1="1048.4" y1="348.4" x2="1064.4" y2="348.4" stroke="#e8eef0" stroke-width="1"/><line x1="1048.4" y1="378.4" x2="1064.4" y2="378.4" stroke="#eef0e8" stroke-width="1"/><rect x="1069.0" y="282.2" width="16" height="82.8" fill="#f9c45c"/><rect x="1069.0" y="365" width="16" height="30.0" fill="#5ec8f4"/><rect x="1069.0" y="395" width="16" height="75.2" fill="#cade80"/><line x1="1069.0" y1="365" x2="1085.0" y2="365" stroke="#e8eef0" stroke-width="1"/><line x1="1069.0" y1="395" x2="1085.0" y2="395" stroke="#eef0e8" stroke-width="1"/><rect x="1089.6" y="283" width="16" height="76.3" fill="#f9c45c"/><rect x="1089.6" y="359.3" width="16" height="28.0" fill="#5ec8f4"/><rect x="1089.6" y="387.3" width="16" height="82.9" fill="#cade80"/><line x1="1089.6" y1="359.3" x2="1105.6" y2="359.3" stroke="#e8eef0" stroke-width="1"/><line x1="1089.6" y1="387.3" x2="1105.6" y2="387.3" stroke="#eef0e8" stroke-width="1"/><rect x="1110.2" y="288.5" width="16" height="58.5" fill="#f9c45c"/><rect x="1110.2" y="347" width="16" height="26.3" fill="#5ec8f4"/><rect x="1110.2" y="373.3" width="16" height="96.9" fill="#cade80"/><line x1="1110.2" y1="347" x2="1126.2" y2="347" stroke="#e8eef0" stroke-width="1"/><line x1="1110.2" y1="373.3" x2="1126.2" y2="373.3" stroke="#eef0e8" stroke-width="1"/><rect x="1130.8" y="310" width="16" height="59.3" fill="#f9c45c"/><rect x="1130.8" y="369.3" width="16" height="27.7" fill="#5ec8f4"/><rect x="1130.8" y="397" width="16" height="73.2" fill="#cade80"/><line x1="1130.8" y1="369.3" x2="1146.8" y2="369.3" stroke="#e8eef0" stroke-width="1"/><line x1="1130.8" y1="397" x2="1146.8" y2="397" stroke="#eef0e8" stroke-width="1"/><rect x="1151.4" y="273.4" width="16" height="94.5" fill="#f9c45c"/><rect x="1151.4" y="367.9" width="16" height="33.3" fill="#5ec8f4"/><rect x="1151.4" y="401.2" width="16" height="69.0" fill="#cade80"/><line x1="1151.4" y1="367.9" x2="1167.4" y2="367.9" stroke="#e8eef0" stroke-width="1"/><line x1="1151.4" y1="401.2" x2="1167.4" y2="401.2" stroke="#eef0e8" stroke-width="1"/><line x1="654.8" y1="470.2" x2="1169.7" y2="470.2" stroke="#ccc" stroke-width="1"/><text x="651.5" y="256.3" text-anchor="end" font-size="9.5" fill="#1a1a1a" transform="translate(651.5,0) scale(.923,1) translate(-651.5,0)">$160,000</text><text x="651.5" y="299.6" text-anchor="end" font-size="9.5" fill="#1a1a1a" transform="translate(651.5,0) scale(.923,1) translate(-651.5,0)">$128,000</text><text x="651.5" y="343.90000000000003" text-anchor="end" font-size="9.5" fill="#1a1a1a" transform="translate(651.5,0) scale(.923,1) translate(-651.5,0)">$96,000</text><text x="651.5" y="387.6" text-anchor="end" font-size="9.5" fill="#1a1a1a" transform="translate(651.5,0) scale(.923,1) translate(-651.5,0)">$64,000</text><text x="651.5" y="430.8" text-anchor="end" font-size="9.5" fill="#1a1a1a" transform="translate(651.5,0) scale(.923,1) translate(-651.5,0)">$32,000</text><text x="651.5" y="473.6" text-anchor="end" font-size="9.5" fill="#1a1a1a" transform="translate(651.5,0) scale(.923,1) translate(-651.5,0)">$0</text><text font-size="9.8" fill="#1a1a1a" text-anchor="end" transform="translate(666.0,479) scale(.923,1) rotate(-60)">07/31/2012</text><text font-size="9.8" fill="#1a1a1a" text-anchor="end" transform="translate(686.6,479) scale(.923,1) rotate(-60)">08/31/2012</text><text font-size="9.8" fill="#1a1a1a" text-anchor="end" transform="translate(707.2,479) scale(.923,1) rotate(-60)">09/30/2012</text><text font-size="9.8" fill="#1a1a1a" text-anchor="end" transform="translate(727.8,479) scale(.923,1) rotate(-60)">10/31/2012</text><text font-size="9.8" fill="#1a1a1a" text-anchor="end" transform="translate(748.4,479) scale(.923,1) rotate(-60)">11/30/2012</text><text font-size="9.8" fill="#1a1a1a" text-anchor="end" transform="translate(769.0,479) scale(.923,1) rotate(-60)">12/31/2012</text><text font-size="9.8" fill="#1a1a1a" text-anchor="end" transform="translate(789.6,479) scale(.923,1) rotate(-60)">01/31/2013</text><text font-size="9.8" fill="#1a1a1a" text-anchor="end" transform="translate(810.2,479) scale(.923,1) rotate(-60)">02/28/2013</text><text font-size="9.8" fill="#1a1a1a" text-anchor="end" transform="translate(830.8,479) scale(.923,1) rotate(-60)">03/31/2013</text><text font-size="9.8" fill="#1a1a1a" text-anchor="end" transform="translate(851.4,479) scale(.923,1) rotate(-60)">04/30/2013</text><text font-size="9.8" fill="#1a1a1a" text-anchor="end" transform="translate(872.0,479) scale(.923,1) rotate(-60)">05/31/2013</text><text font-size="9.8" fill="#1a1a1a" text-anchor="end" transform="translate(892.6,479) scale(.923,1) rotate(-60)">06/30/2013</text><text font-size="9.8" fill="#1a1a1a" text-anchor="end" transform="translate(913.2,479) scale(.923,1) rotate(-60)">07/31/2013</text><text font-size="9.8" fill="#1a1a1a" text-anchor="end" transform="translate(933.8,479) scale(.923,1) rotate(-60)">08/31/2013</text><text font-size="9.8" fill="#1a1a1a" text-anchor="end" transform="translate(954.4,479) scale(.923,1) rotate(-60)">09/30/2013</text><text font-size="9.8" fill="#1a1a1a" text-anchor="end" transform="translate(975.0,479) scale(.923,1) rotate(-60)">10/31/2013</text><text font-size="9.8" fill="#1a1a1a" text-anchor="end" transform="translate(995.6,479) scale(.923,1) rotate(-60)">11/30/2013</text><text font-size="9.8" fill="#1a1a1a" text-anchor="end" transform="translate(1016.2,479) scale(.923,1) rotate(-60)">12/31/2013</text><text font-size="9.8" fill="#1a1a1a" text-anchor="end" transform="translate(1036.8,479) scale(.923,1) rotate(-60)">01/31/2014</text><text font-size="9.8" fill="#1a1a1a" text-anchor="end" transform="translate(1057.4,479) scale(.923,1) rotate(-60)">02/28/2014</text><text font-size="9.8" fill="#1a1a1a" text-anchor="end" transform="translate(1078.0,479) scale(.923,1) rotate(-60)">03/31/2014</text><text font-size="9.8" fill="#1a1a1a" text-anchor="end" transform="translate(1098.6,479) scale(.923,1) rotate(-60)">04/30/2014</text><text font-size="9.8" fill="#1a1a1a" text-anchor="end" transform="translate(1119.2,479) scale(.923,1) rotate(-60)">05/31/2014</text><text font-size="9.8" fill="#1a1a1a" text-anchor="end" transform="translate(1139.8,479) scale(.923,1) rotate(-60)">06/30/2014</text><text font-size="9.8" fill="#1a1a1a" text-anchor="end" transform="translate(1160.4,479) scale(.923,1) rotate(-60)">07/31/2014</text></svg><div class="abs" style="left:1158px;top:243px;width:17px;height:17px;border:1px solid #bdbdbd;border-radius:2px;background:linear-gradient(#fdfdfd,#dedede)"></div><svg class="abs" style="left:1161px;top:245px" width="11" height="12" viewBox="0 0 11 12"><path d="M5.5 1V8M3 5.5L5.5 8.2L8 5.5" fill="none" stroke="#777" stroke-width="1.3"/><path d="M1 7.5V10.5H10V7.5" fill="none" stroke="#777" stroke-width="1.2"/></svg><div class="abs" style="left:835px;top:543px;width:156px;height:26px;background:#fff;border:1px solid #d8d8d8;box-shadow:1px 1px 1px #bbb"></div><svg class="abs" style="left:840px;top:549px" width="12" height="12" viewBox="0 0 12 12"><rect x="1" y="4" width="2.5" height="7" fill="#cade80" stroke="#8aae30" stroke-width=".6"/><rect x="4.5" y="1" width="2.5" height="10" fill="#cade80" stroke="#8aae30" stroke-width=".6"/><rect x="8" y="7" width="2.5" height="4" fill="#cade80" stroke="#8aae30" stroke-width=".6"/><path d="M0.5 11.3H11.5" stroke="#8aae30" stroke-width=".8"/></svg><span class="t" style="left:855px;top:551px;font-size:9.5px;color:#222;transform:scaleX(.923)">BASIC</span><svg class="abs" style="left:889px;top:549px" width="12" height="12" viewBox="0 0 12 12"><rect x="1" y="4" width="2.5" height="7" fill="#5ec8f4" stroke="#2a8fd0" stroke-width=".6"/><rect x="4.5" y="1" width="2.5" height="10" fill="#5ec8f4" stroke="#2a8fd0" stroke-width=".6"/><rect x="8" y="7" width="2.5" height="4" fill="#5ec8f4" stroke="#2a8fd0" stroke-width=".6"/><path d="M0.5 11.3H11.5" stroke="#2a8fd0" stroke-width=".8"/></svg><span class="t" style="left:904px;top:551px;font-size:9.5px;color:#222;transform:scaleX(.923)">PRO</span><svg class="abs" style="left:939px;top:549px" width="12" height="12" viewBox="0 0 12 12"><rect x="1" y="4" width="2.5" height="7" fill="#f9c45c" stroke="#d08a20" stroke-width=".6"/><rect x="4.5" y="1" width="2.5" height="10" fill="#f9c45c" stroke="#d08a20" stroke-width=".6"/><rect x="8" y="7" width="2.5" height="4" fill="#f9c45c" stroke="#d08a20" stroke-width=".6"/><path d="M0.5 11.3H11.5" stroke="#d08a20" stroke-width=".8"/></svg><span class="t" style="left:954px;top:551px;font-size:9.5px;color:#222;transform:scaleX(.923)">START</span><div class="abs" style="left:4px;top:624px;width:587px;height:36.6px;background:#eeeeee"></div><span class="t" style="right:897.5px;top:624.81px;font-size:10.5px;color:#000;font-weight:normal;-webkit-text-stroke:0.2px #000;transform:scaleX(0.915);transform-origin:100% 0">Month Ending</span><span class="t" style="right:897.5px;top:635.81px;font-size:10.5px;color:#000;font-weight:normal;-webkit-text-stroke:0.2px #000;transform:scaleX(0.915);transform-origin:100% 0">06/30/2014</span><span class="t" style="right:897.5px;top:649.41px;font-size:10.5px;color:#000;font-weight:normal;-webkit-text-stroke:0.2px #000;transform:scaleX(0.915);transform-origin:100% 0">Actual</span><span class="t" style="right:719.5px;top:624.81px;font-size:10.5px;color:#000;font-weight:normal;-webkit-text-stroke:0.2px #000;transform:scaleX(0.915);transform-origin:100% 0">Month Ending</span><span class="t" style="right:725px;top:635.81px;font-size:10.5px;color:#000;font-weight:normal;-webkit-text-stroke:0.2px #000;transform:scaleX(0.915);transform-origin:100% 0">07/31/2014</span><span class="t" style="right:780.5px;top:649.41px;font-size:10.5px;color:#000;font-weight:normal;-webkit-text-stroke:0.2px #000;transform:scaleX(0.915);transform-origin:100% 0">Actual</span><span class="t" style="right:651px;top:649.41px;font-size:10.5px;color:#000;font-weight:normal;-webkit-text-stroke:0.2px #000;transform:scaleX(0.915);transform-origin:100% 0">Period Diff</span><span class="t" style="left:12.4px;top:662.11px;font-size:10.5px;color:#000;font-weight:normal;-webkit-text-stroke:0.2px #000;transform:scaleX(0.915)">Income</span><span class="t" style="left:28.6px;top:673.81px;font-size:10.5px;color:#000;font-weight:normal;-webkit-text-stroke:0.2px #000;transform:scaleX(0.915)">Primary Income</span><span class="t" style="right:897.5px;top:673.61px;font-size:10.5px;color:#000;font-weight:normal;-webkit-text-stroke:0.2px #000;transform:scaleX(0.915);transform-origin:100% 0">113,170.00</span><span class="t" style="right:780.5px;top:673.61px;font-size:10.5px;color:#000;font-weight:normal;-webkit-text-stroke:0.2px #000;transform:scaleX(0.915);transform-origin:100% 0">144,859.00</span><span class="t" style="right:667.5px;top:673.61px;font-size:10.5px;color:#000;font-weight:normal;-webkit-text-stroke:0.2px #000;transform:scaleX(0.915);transform-origin:100% 0">31,689.00</span><svg class="abs" style="left:539px;top:674.0px" width="9" height="9" viewBox="0 0 9 9"><path d="M4.5 0.5 L8.5 4.8 H6 V8.5 H3 V4.8 H0.5 Z" fill="#7cbf3c"/></svg><span class="t" style="left:28.6px;top:687.71px;font-size:10.5px;color:#000;font-weight:normal;-webkit-text-stroke:0.2px #000;transform:scaleX(0.915)">Secondary Income</span><span class="t" style="right:897.5px;top:687.61px;font-size:10.5px;color:#000;font-weight:normal;-webkit-text-stroke:0.2px #000;transform:scaleX(0.915);transform-origin:100% 0">5,010.00</span><span class="t" style="right:780.5px;top:687.61px;font-size:10.5px;color:#000;font-weight:normal;-webkit-text-stroke:0.2px #000;transform:scaleX(0.915);transform-origin:100% 0">2,010.00</span><span class="t" style="right:663.5px;top:687.61px;font-size:10.5px;color:#000;font-weight:normal;-webkit-text-stroke:0.2px #000;transform:scaleX(0.915);transform-origin:100% 0">(3,000.00)</span><svg class="abs" style="left:539px;top:688.5px" width="9" height="9" viewBox="0 0 9 9"><path d="M4.5 8.5 L8.5 4.2 H6 V0.5 H3 V4.2 H0.5 Z" fill="#e8262a"/></svg><span class="t" style="left:12.8px;top:701.11px;font-size:10.5px;color:#000;font-weight:normal;-webkit-text-stroke:0.2px #000;transform:scaleX(0.915)">Total Income</span><span class="t" style="right:897.5px;top:705.51px;font-size:10.5px;color:#000;font-weight:normal;-webkit-text-stroke:0.2px #000;transform:scaleX(0.915);transform-origin:100% 0">118,160.00</span><span class="t" style="right:780.5px;top:705.51px;font-size:10.5px;color:#000;font-weight:normal;-webkit-text-stroke:0.2px #000;transform:scaleX(0.915);transform-origin:100% 0">146,869.00</span><span class="t" style="right:667.5px;top:705.51px;font-size:10.5px;color:#000;font-weight:normal;-webkit-text-stroke:0.2px #000;transform:scaleX(0.915);transform-origin:100% 0">28,689.00</span><svg class="abs" style="left:539px;top:705.9px" width="9" height="9" viewBox="0 0 9 9"><path d="M4.5 0.5 L8.5 4.8 H6 V8.5 H3 V4.8 H0.5 Z" fill="#7cbf3c"/></svg><span class="t" style="left:12.4px;top:722.71px;font-size:10.5px;color:#000;font-weight:normal;-webkit-text-stroke:0.2px #000;transform:scaleX(0.915)">Expenses</span><span class="t" style="left:28.6px;top:735.81px;font-size:10.5px;color:#000;font-weight:normal;-webkit-text-stroke:0.2px #000;transform:scaleX(0.915)">Production Costs</span><span class="t" style="right:897.5px;top:735.81px;font-size:10.5px;color:#000;font-weight:normal;-webkit-text-stroke:0.2px #000;transform:scaleX(0.915);transform-origin:100% 0">33,176.00</span><span class="t" style="right:780.5px;top:735.81px;font-size:10.5px;color:#000;font-weight:normal;-webkit-text-stroke:0.2px #000;transform:scaleX(0.915);transform-origin:100% 0">40,973.00</span><span class="t" style="right:667.5px;top:735.81px;font-size:10.5px;color:#000;font-weight:normal;-webkit-text-stroke:0.2px #000;transform:scaleX(0.915);transform-origin:100% 0">7,797.00</span><svg class="abs" style="left:539px;top:736.2px" width="9" height="9" viewBox="0 0 9 9"><path d="M4.5 0.5 L8.5 4.8 H6 V8.5 H3 V4.8 H0.5 Z" fill="#7cbf3c"/></svg><span class="t" style="left:27.7px;top:750.41px;font-size:10.5px;color:#000;font-weight:normal;-webkit-text-stroke:0.2px #000;transform:scaleX(0.915)">Marketing Costs</span><span class="t" style="right:897.5px;top:750.61px;font-size:10.5px;color:#000;font-weight:normal;-webkit-text-stroke:0.2px #000;transform:scaleX(0.915);transform-origin:100% 0">30,160.00</span><span class="t" style="right:780.5px;top:750.61px;font-size:10.5px;color:#000;font-weight:normal;-webkit-text-stroke:0.2px #000;transform:scaleX(0.915);transform-origin:100% 0">29,266.00</span><span class="t" style="right:663.5px;top:750.61px;font-size:10.5px;color:#000;font-weight:normal;-webkit-text-stroke:0.2px #000;transform:scaleX(0.915);transform-origin:100% 0">(894.00)</span><svg class="abs" style="left:539px;top:751.5px" width="9" height="9" viewBox="0 0 9 9"><path d="M4.5 8.5 L8.5 4.2 H6 V0.5 H3 V4.2 H0.5 Z" fill="#e8262a"/></svg><span class="t" style="left:11.9px;top:762.81px;font-size:10.5px;color:#000;font-weight:normal;-webkit-text-stroke:0.2px #000;transform:scaleX(0.915)">Total Expenses</span><span class="t" style="right:897.5px;top:766.01px;font-size:10.5px;color:#000;font-weight:normal;-webkit-text-stroke:0.2px #000;transform:scaleX(0.915);transform-origin:100% 0">129,688.00</span><span class="t" style="right:780.5px;top:766.01px;font-size:10.5px;color:#000;font-weight:normal;-webkit-text-stroke:0.2px #000;transform:scaleX(0.915);transform-origin:100% 0">144,868.00</span><span class="t" style="right:667.5px;top:766.01px;font-size:10.5px;color:#000;font-weight:normal;-webkit-text-stroke:0.2px #000;transform:scaleX(0.915);transform-origin:100% 0">15,180.00</span><svg class="abs" style="left:539px;top:766.4px" width="9" height="9" viewBox="0 0 9 9"><path d="M4.5 0.5 L8.5 4.8 H6 V8.5 H3 V4.8 H0.5 Z" fill="#7cbf3c"/></svg><span class="t" style="left:11.9px;top:781.91px;font-size:10.5px;color:#000;font-weight:normal;-webkit-text-stroke:0.2px #000;transform:scaleX(0.915)">Net Income</span><span class="t" style="right:897.5px;top:784.71px;font-size:10.5px;color:#000;font-weight:normal;-webkit-text-stroke:0.2px #000;transform:scaleX(0.915);transform-origin:100% 0">(11,508.00)</span><span class="t" style="right:780.5px;top:784.71px;font-size:10.5px;color:#000;font-weight:normal;-webkit-text-stroke:0.2px #000;transform:scaleX(0.915);transform-origin:100% 0">2,001.00</span><span class="t" style="right:667.5px;top:784.71px;font-size:10.5px;color:#000;font-weight:normal;-webkit-text-stroke:0.2px #000;transform:scaleX(0.915);transform-origin:100% 0">13,509.00</span><svg class="abs" style="left:539px;top:785.1px" width="9" height="9" viewBox="0 0 9 9"><path d="M4.5 0.5 L8.5 4.8 H6 V8.5 H3 V4.8 H0.5 Z" fill="#7cbf3c"/></svg><div class="abs" style="left:214px;top:685.5px;width:377px;height:1.5px;background:#555"></div><div class="abs" style="left:214px;top:700px;width:377px;height:1.5px;background:#555"></div><div class="abs" style="left:214px;top:719px;width:377px;height:1px;background:#555"></div><div class="abs" style="left:214px;top:721.5px;width:377px;height:1px;background:#555"></div><div class="abs" style="left:214px;top:749.6px;width:377px;height:1px;background:#666"></div><div class="abs" style="left:214px;top:762px;width:377px;height:1.5px;background:#555"></div><div class="abs" style="left:214px;top:780px;width:377px;height:2.2px;background:#a8a8a8"></div><div class="abs" style="left:214px;top:798.6px;width:377px;height:1px;background:#555"></div><div class="abs" style="left:214px;top:801px;width:377px;height:1px;background:#555"></div><svg class="abs" style="left:0;top:0" width="1200" height="823" viewBox="0 0 1200 823"><defs><clipPath id="pc"><rect x="600" y="600" width="600" height="146.5"/></clipPath></defs><g clip-path="url(#pc)" stroke="#fafafa" stroke-width="1" stroke-linejoin="round"><path d="M889.50,721.50 L930.00,721.50 A40.50,44.00 0 0 1 885.97,765.33 Z" fill="#f2373c"/><path d="M889.50,721.50 L885.97,765.33 A40.50,44.00 0 0 1 849.00,721.50 Z" fill="#f9c45c"/><path d="M889.50,721.50 L849.00,721.50 A40.50,44.00 0 0 1 883.30,678.02 Z" fill="#5ec8f4"/><path d="M901.80,707.90 L894.78,662.33 A42.52,46.20 0 0 1 944.30,706.29 Z" fill="#c9df7c"/></g><g fill="none" stroke="#888" stroke-width="1"><path d="M838,669.6 H843 L859.4,692.5"/><path d="M927.5,672.5 L942.5,661.3 H947"/><path d="M837.3,750.9 H841.9 L844.5,747.7"/><path d="M924,746.9 L930.7,756.5 H936"/></g></svg><span class="t" style="left:731px;top:664.71px;font-size:9.5px;color:#111;font-weight:normal;-webkit-text-stroke:0.2px #111;transform:scaleX(0.975)">Revenue - Maintenances</span><span class="t" style="left:951.9px;top:656.71px;font-size:9.5px;color:#111;font-weight:normal;-webkit-text-stroke:0.2px #111;transform:scaleX(0.975)">Revenue - Licenses</span><span class="t" style="left:753.9px;top:744.96px;font-size:9.5px;color:#111;font-weight:normal;-webkit-text-stroke:0.2px #111;transform:scaleX(0.975)">Revenue - Services</span><span class="t" style="left:940px;top:751.66px;font-size:9.5px;color:#111;font-weight:normal;-webkit-text-stroke:0.2px #111;transform:scaleX(0.975)">Revenue - Subscriptions</span><div class="abs" style="left:917px;top:696px;width:185px;height:22px;background:#fff;border:1px solid #333"></div><span class="t" style="left:921px;top:702.87px;font-size:9.6px;letter-spacing:.42px;color:#333;font-weight:normal;-webkit-text-stroke:0px #333;transform:scaleX(1)">Revenue - Licenses - 39,654.63 (27%)</span><svg class="abs" style="left:906px;top:682px" width="14" height="21" viewBox="0 0 14 21"><path d="M1.5 1 V16 L5 12.5 L8 19.5 L10.5 18.5 L7.5 11.5 H12.5 Z" fill="#fff" stroke="#000" stroke-width="1.1" stroke-linejoin="round"/></svg><div class="abs" style="left:1158px;top:630px;width:17px;height:17px;border:1px solid #bdbdbd;border-radius:2px;background:linear-gradient(#fdfdfd,#dedede)"></div><svg class="abs" style="left:1161px;top:632px" width="11" height="12" viewBox="0 0 11 12"><path d="M5.5 1V8M3 5.5L5.5 8.2L8 5.5" fill="none" stroke="#777" stroke-width="1.3"/><path d="M1 7.5V10.5H10V7.5" fill="none" stroke="#777" stroke-width="1.2"/></svg><div class="abs" style="left:1058px;top:758px;width:116px;height:24px;background:#fff;border:1px solid #c8c8c8"></div><svg class="abs" style="left:1062px;top:760px" width="19" height="19" viewBox="0 0 19 19"><circle cx="11.5" cy="7.5" r="5.3" fill="none" stroke="#666" stroke-width="2"/><path d="M7.6 11.4 L2 17" stroke="#666" stroke-width="2.6" stroke-linecap="round"/></svg><span class="t" style="left:1083.5px;top:763.33px;font-size:14.5px;letter-spacing:1.6px;color:#555;font-weight:normal;-webkit-text-stroke:0.2px #555;transform:scaleX(1)">Show Data</span><div class="abs" style="left:0;top:803px;width:1200px;height:20px;background:#2e5786;border-top:1.5px solid #0c1a3c"></div><span class="t" style="left:7px;top:810.5px;font-size:9.3px;font-weight:bold;color:#fff;transform:scaleX(.89)">Privacy Policy | © 1999-2014 &nbsp;Intacct Corporation</span></body></html>
